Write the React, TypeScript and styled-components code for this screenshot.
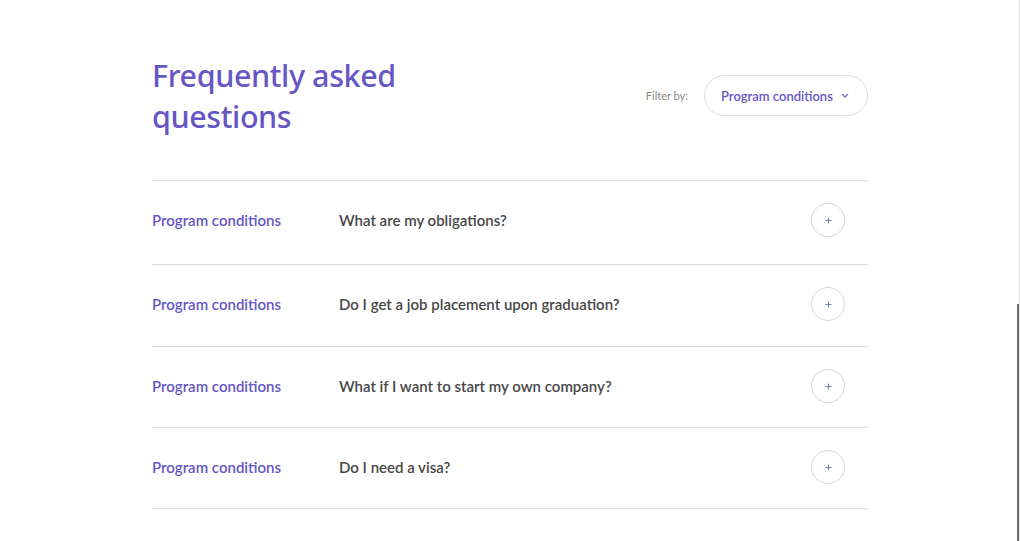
import styled, { createGlobalStyle } from "styled-components";

const GlobalStyle = createGlobalStyle`
  html, body {
    margin: 0;
    padding: 0;
    background: #ffffff;
    overflow: hidden;
  }
  body {
    font-family: Lato, "Open Sans", sans-serif;
  }
`;

const Page = styled.div`
  width: 1020px;
  height: 541px;
  display: flex;
  justify-content: flex-start;
  padding-left: 152px;
  box-sizing: border-box;
`;

const Section = styled.section`
  width: 716px;
  padding-top: 55px;
  display: flex;
  flex-direction: column;
`;

const Header = styled.div`
  display: flex;
  justify-content: space-between;
  align-items: flex-start;
  height: 125px;
`;

const Title = styled.h1`
  margin: 0;
  font-family: "Noto Sans", "Open Sans", sans-serif;
  font-weight: 500;
  font-size: 30.5px;
  line-height: 41px;
  letter-spacing: -0.4px;
  color: #6656c4;
  width: 260px;
`;

const Filter = styled.div`
  display: flex;
  align-items: center;
  gap: 16px;
  margin-top: 20px;
`;

const FilterLabel = styled.span`
  font-size: 11px;
  color: #8a8a8a;
`;

const Select = styled.button`
  height: 41px;
  width: 164px;
  box-sizing: border-box;
  border: 1px solid #dcdcdc;
  border-radius: 21px;
  background: #fff;
  display: flex;
  align-items: center;
  justify-content: space-between;
  padding: 0 18px 0 16px;
  font-family: Lato, sans-serif;
  font-size: 13px;
  font-weight: 600;
  color: #6656c4;
  cursor: pointer;
`;

const List = styled.div`
  border-top: 1px solid #dadada;
`;

const Row = styled.div`
  height: 82px;
  box-sizing: border-box;
  border-bottom: 1px solid #dadada;
  display: flex;
  align-items: flex-start;
  padding: 22px 23px 0 0;

  &:first-child {
    height: 84px;
  }
  &:nth-child(n + 3) {
    height: 81px;
  }
`;

const Category = styled.span`
  width: 187px;
  flex-shrink: 0;
  font-size: 15px;
  line-height: 34px;
  font-weight: 600;
  color: #6656c4;
`;

const Question = styled.span`
  flex: 1;
  font-size: 15px;
  line-height: 34px;
  font-weight: 600;
  color: #474747;
`;

const PlusButton = styled.button`
  width: 34px;
  height: 34px;
  border-radius: 50%;
  border: 1px solid #d6d6d6;
  background: #fff;
  display: flex;
  align-items: center;
  justify-content: center;
  padding: 0;
  cursor: pointer;
`;

const ScrollTrack = styled.div`
  position: fixed;
  top: 0;
  right: 0;
  width: 1px;
  height: 541px;
  background: #dedede;
`;

const ScrollThumb = styled.div`
  position: fixed;
  top: 304px;
  right: 1px;
  width: 2px;
  height: 237px;
  background: #6e6e6e;
`;

const faqs = [
  "What are my obligations?",
  "Do I get a job placement upon graduation?",
  "What if I want to start my own company?",
  "Do I need a visa?",
];

const Plus = () => (
  <svg width="7" height="7" viewBox="0 0 7 7">
    <path d="M3.5 0.5v6M0.5 3.5h6" stroke="#6b7fb0" strokeWidth="1" />
  </svg>
);

const Chevron = () => (
  <svg width="8" height="5" viewBox="0 0 8 5">
    <path d="M1 1l3 3 3-3" fill="none" stroke="#7a6bd0" strokeWidth="1.3" />
  </svg>
);

export default function App() {
  return (
    <>
      <GlobalStyle />
      <Page>
        <Section>
          <Header>
            <Title>Frequently asked questions</Title>
            <Filter>
              <FilterLabel>Filter by:</FilterLabel>
              <Select>
                Program conditions
                <Chevron />
              </Select>
            </Filter>
          </Header>
          <List>
            {faqs.map((q, i) => (
              <Row key={q + "_" + i}>
                <Category>Program conditions</Category>
                <Question>{q}</Question>
                <PlusButton aria-label="Expand">
                  <Plus />
                </PlusButton>
              </Row>
            ))}
          </List>
        </Section>
      </Page>
      <ScrollTrack />
      <ScrollThumb />
    </>
  );
}
